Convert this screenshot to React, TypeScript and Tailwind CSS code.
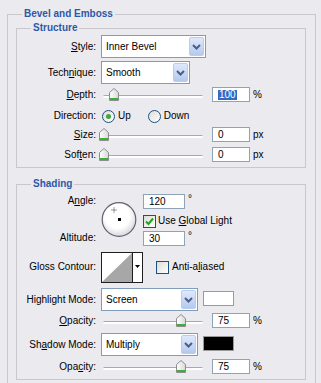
import React from "react";

function Chevron() {
  return (
    <svg width="9" height="6" viewBox="0 0 9 6">
      <path d="M1 1 L4.5 4.5 L8 1" fill="none" stroke="#4b5f86" strokeWidth="2" />
    </svg>
  );
}

function Select({ w, value }: { w: string; value: string }) {
  return (
    <div className={`flex h-[23px] ${w} shrink-0 items-stretch border border-[#7f9db9] bg-white`}>
      <div className="flex flex-1 items-center pl-[4px]">{value}</div>
      <div className="m-px flex w-[15px] items-center justify-center rounded-[2px] border border-[#b9cbee] bg-linear-to-b from-[#dfe9fc] to-[#b5c9ef]">
        <Chevron />
      </div>
    </div>
  );
}

function Thumb() {
  return (
    <svg width="10" height="13" viewBox="0 0 10 13">
      <defs>
        <linearGradient id="tg" x1="0" y1="0" x2="1" y2="0">
          <stop offset="0" stopColor="#ffffff" />
          <stop offset="1" stopColor="#d8d8d8" />
        </linearGradient>
      </defs>
      <path d="M0.5 4.5 L5 0.5 L9.5 4.5 V12.5 H0.5 Z" fill="url(#tg)" stroke="#8c8c8c" />
      <rect x="1" y="10" width="8" height="2" fill="#3cae3c" />
    </svg>
  );
}

function Slider({ pos }: { pos: number }) {
  return (
    <div className="relative h-[15px] w-[102px] shrink-0">
      <div className="absolute left-[2px] right-0 top-[8px] h-[3px] rounded-full border-t border-[#a9a8ae] bg-white" />
      <div className="absolute top-[1px]" style={{ left: pos }}>
        <Thumb />
      </div>
    </div>
  );
}

function NumInput({ value, w = "w-[38px]", selected }: { value: string; w?: string; selected?: boolean }) {
  return (
    <div className={`flex h-[15px] ${w} shrink-0 items-center border border-[#8fa3b8] bg-white pl-[5px] leading-none`}>
      {selected ? <span className="bg-[#316ac5] px-px text-white">{value}</span> : value}
    </div>
  );
}

function Label({ children }: { children: React.ReactNode }) {
  return <div className="w-[79px] shrink-0 pr-0 text-right">{children}</div>;
}

function Radio({ checked }: { checked?: boolean }) {
  return (
    <div className="flex h-[13px] w-[13px] shrink-0 items-center justify-center rounded-full border border-[#1c5180] bg-linear-to-br from-[#dcdcd6] to-white">
      {checked && <div className="h-[5px] w-[5px] rounded-full bg-[#3ea83e]" />}
    </div>
  );
}

function Checkbox({ checked }: { checked?: boolean }) {
  return (
    <div className="flex h-[13px] w-[13px] shrink-0 items-center justify-center border border-[#1c5180] bg-linear-to-br from-[#dcdcd6] to-white">
      {checked && (
        <svg width="9" height="9" viewBox="0 0 9 9">
          <path d="M1 4.5 L3.5 7 L8 1.5" fill="none" stroke="#21a121" strokeWidth="2" />
        </svg>
      )}
    </div>
  );
}

function SliderRow({ label, pos, value, unit, selected, className }: { label: React.ReactNode; pos: number; value: string; unit: string; selected?: boolean; className: string }) {
  return (
    <div className={`flex h-[15px] items-center ${className}`}>
      <Label>{label}</Label>
      <div className="ml-[5px]">
        <Slider pos={pos} />
      </div>
      <div className="ml-[9px]">
        <NumInput value={value} selected={selected} />
      </div>
      <span className="ml-[3px]">{unit}</span>
    </div>
  );
}

function Dial() {
  return (
    <svg width="37" height="36" viewBox="0 0 37 36">
      <defs>
        <radialGradient id="dg" cx="0.45" cy="0.4" r="0.6">
          <stop offset="0.6" stopColor="#ffffff" />
          <stop offset="1" stopColor="#d9d9de" />
        </radialGradient>
      </defs>
      <circle cx="18" cy="17.5" r="16.8" fill="url(#dg)" stroke="#5f6470" strokeWidth="1.2" />
      <path d="M13 5.5 V10.5 M10.5 8 H15.5" stroke="#333" strokeWidth="1" strokeDasharray="1 1" />
      <rect x="17" y="16" width="3" height="3" fill="#000" />
    </svg>
  );
}

export default function App() {
  return (
    <div className="h-[383px] w-[321px] overflow-hidden bg-[#ebeaef] pl-[7px] pt-[7px] font-[Liberation_Sans,Arial,sans-serif] text-[10px] leading-[14px] text-black">
      <fieldset className="w-[309px] border border-[#c8c7cc] pb-[8px] pl-[8px] pr-[9px]">
        <legend className="ml-[6px] px-[2px] text-[10px] font-bold leading-[14px] text-[#2b59a6]">Bevel and Emboss</legend>

        <fieldset className="w-[290px] border border-[#c8c7cc] pb-[5px]">
          <legend className="ml-[14px] px-[2px] font-bold leading-[14px] text-[#2b59a6]">Structure</legend>
          <div className="flex h-[23px] items-center">
            <Label>
              <u>S</u>tyle:
            </Label>
            <div className="ml-[5px]">
              <Select w="w-[105px]" value="Inner Bevel" />
            </div>
          </div>
          <div className="mt-[3px] flex h-[23px] items-center">
            <Label>
              Tech<u>n</u>ique:
            </Label>
            <div className="ml-[5px]">
              <Select w="w-[89px]" value="Smooth" />
            </div>
          </div>
          <SliderRow className="mt-[3px]" label={<><u>D</u>epth:</>} pos={8} value="100" unit="%" selected />
          <div className="mt-[7px] flex h-[14px] items-center">
            <Label>Direction:</Label>
            <div className="ml-[6px] flex items-center">
              <Radio checked />
              <span className="ml-[3px]">Up</span>
              <div className="ml-[17px]">
                <Radio />
              </div>
              <span className="ml-[3px]">Down</span>
            </div>
          </div>
          <SliderRow className="mt-[4px]" label={<><u>S</u>ize:</>} pos={-2} value="0" unit="px" />
          <SliderRow className="mt-[5px]" label={<>Sof<u>t</u>en:</>} pos={-2} value="0" unit="px" />
        </fieldset>

        <fieldset className="mt-[9px] w-[290px] border border-[#c8c7cc] pb-[5px]">
          <legend className="ml-[14px] px-[2px] font-bold leading-[14px] text-[#2b59a6]">Shading</legend>
          <div className="mt-[3px] flex h-[51px]">
            <div className="flex w-[79px] shrink-0 flex-col text-right">
              <div className="h-[13px] leading-[13px]">
                A<u>n</u>gle:
              </div>
              <div className="mt-[24px] h-[13px] leading-[13px]">Altitude:</div>
            </div>
            <div className="ml-[5px] mt-[8px]">
              <Dial />
            </div>
            <div className="ml-[5px] flex flex-col">
              <div className="flex items-start">
                <NumInput w="w-[42px]" value="120" />
                <span className="ml-[3px] leading-[10px]">°</span>
              </div>
              <div className="mt-[5px] flex items-center">
                <Checkbox checked />
                <span className="ml-[2px]">
                  Use <u>G</u>lobal Light
                </span>
              </div>
              <div className="mt-[3px] flex items-start">
                <NumInput w="w-[42px]" value="30" />
                <span className="ml-[3px] leading-[10px]">°</span>
              </div>
            </div>
          </div>

          <div className="mt-[7px] flex h-[30px] items-center">
            <Label>Gloss Contour:</Label>
            <div className="ml-[5px] flex h-[31px] w-[42px] shrink-0 border border-[#1e1e1e] bg-white">
              <svg width="30" height="29" viewBox="0 0 30 29">
                <polygon points="0,29 30,0 30,29" fill="#a7a7a7" />
              </svg>
              <div className="flex w-[10px] items-center justify-center border-l border-[#1e1e1e] pb-[2px]">
                <svg width="5" height="3" viewBox="0 0 5 3">
                  <polygon points="0,0 5,0 2.5,3" fill="#000" />
                </svg>
              </div>
            </div>
            <div className="ml-[13px] flex items-center">
              <Checkbox />
              <span className="ml-[3px]">
                Anti-a<u>l</u>iased
              </span>
            </div>
          </div>

          <div className="mt-[6px] flex h-[23px] items-center">
            <Label>
              Hi<u>g</u>hlight Mode:
            </Label>
            <div className="ml-[5px]">
              <Select w="w-[97px]" value="Screen" />
            </div>
            <div className="mb-[3px] ml-[5px] h-[15px] w-[31px] border border-[#9a9a9a] bg-white" />
          </div>
          <SliderRow className="mt-[2px]" label={<><u>O</u>pacity:</>} pos={75} value="75" unit="%" />
          <div className="mt-[5px] flex h-[23px] items-center">
            <Label>
              Sh<u>a</u>dow Mode:
            </Label>
            <div className="ml-[5px]">
              <Select w="w-[97px]" value="Multiply" />
            </div>
            <div className="mb-[3px] ml-[5px] h-[15px] w-[31px] border border-[#9a9a9a] bg-black" />
          </div>
          <SliderRow className="mt-[3px]" label={<>Opa<u>c</u>ity:</>} pos={75} value="75" unit="%" />
        </fieldset>
      </fieldset>
    </div>
  );
}
